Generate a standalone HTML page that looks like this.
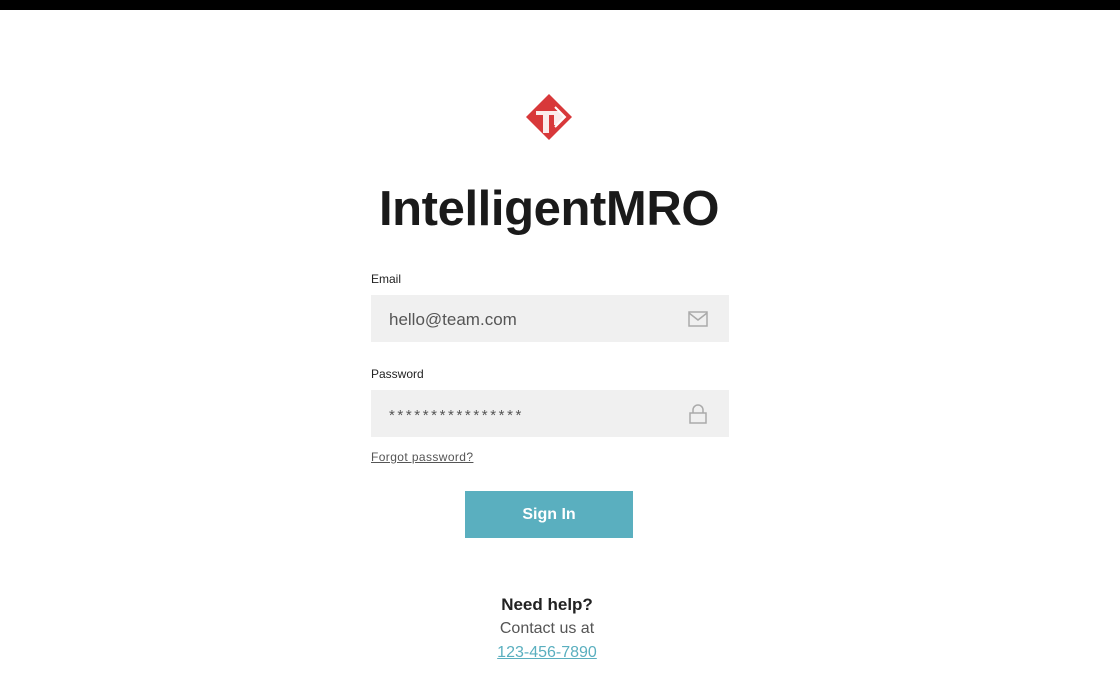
<!DOCTYPE html>
<html><head><style>
body{margin:0;width:1120px;height:700px;background:#fff;font-family:"Liberation Sans",sans-serif;position:relative;overflow:hidden}
.bar{position:absolute;left:0;top:0;width:1120px;height:10px;background:#000}
.a{position:absolute}
.lbl{font-size:12px;color:#222;left:371px}
.inp{left:371px;width:358px;height:47px;background:#f0f0f0}
.inp span{position:absolute;left:18px;top:15px;font-size:17px;color:#555}
</style></head><body>
<div class="bar"></div>
<svg class="a" style="left:525px;top:93px" width="48" height="48" viewBox="0 0 48 48">
<polygon points="24,1 47,24 24,47 1,24" fill="#d8383a"/>
<path d="M11,18 H34 L40,24 L33,32 H29 V22 H24 V40 H18 V22 H11 Z" fill="#fff" opacity=".9"/>
<path d="M30,14 L40,24 L30,34" fill="none" stroke="#fff" stroke-width="2"/>
</svg>
<div class="a" style="left:0;width:1098px;text-align:center;top:181px;font-size:49px;font-weight:bold;color:#1a1a1a;letter-spacing:-0.4px">IntelligentMRO</div>
<div class="a lbl" style="top:272px">Email</div>
<div class="a inp" style="top:295px"><span>hello@team.com</span>
<svg class="a" style="left:317px;top:16px" width="20" height="16" viewBox="0 0 20 16"><rect x="1" y="1" width="18" height="14" fill="none" stroke="#aaa" stroke-width="1.5"/><path d="M1,2 L10,9 L19,2" fill="none" stroke="#aaa" stroke-width="1.5"/></svg></div>
<div class="a lbl" style="top:367px">Password</div>
<div class="a inp" style="top:390px"><span style="font-size:15px;top:17px;letter-spacing:2.6px">****************</span>
<svg class="a" style="left:317px;top:14px" width="20" height="20" viewBox="0 0 20 20"><rect x="2" y="9" width="16" height="10" fill="none" stroke="#aaa" stroke-width="1.5"/><path d="M5,9 V6 A5,5 0 0 1 15,6 V9" fill="none" stroke="#aaa" stroke-width="1.5"/></svg></div>
<div class="a" style="left:371px;top:450px;font-size:12px;color:#555;text-decoration:underline;letter-spacing:0.4px">Forgot password?</div>
<div class="a" style="left:465px;top:491px;width:168px;height:47px;background:#5aafbf;color:#fff;font-size:16px;font-weight:bold;text-align:center;line-height:48px">Sign In</div>
<div class="a" style="left:0;width:1094px;text-align:center;top:595px;font-size:17px;font-weight:bold;color:#222">Need help?</div>
<div class="a" style="left:0;width:1094px;text-align:center;top:620px;font-size:16px;color:#555">Contact us at</div>
<div class="a" style="left:0;width:1094px;text-align:center;top:644px;font-size:16px;color:#5aafbf;text-decoration:underline">123-456-7890</div>
</body></html>
